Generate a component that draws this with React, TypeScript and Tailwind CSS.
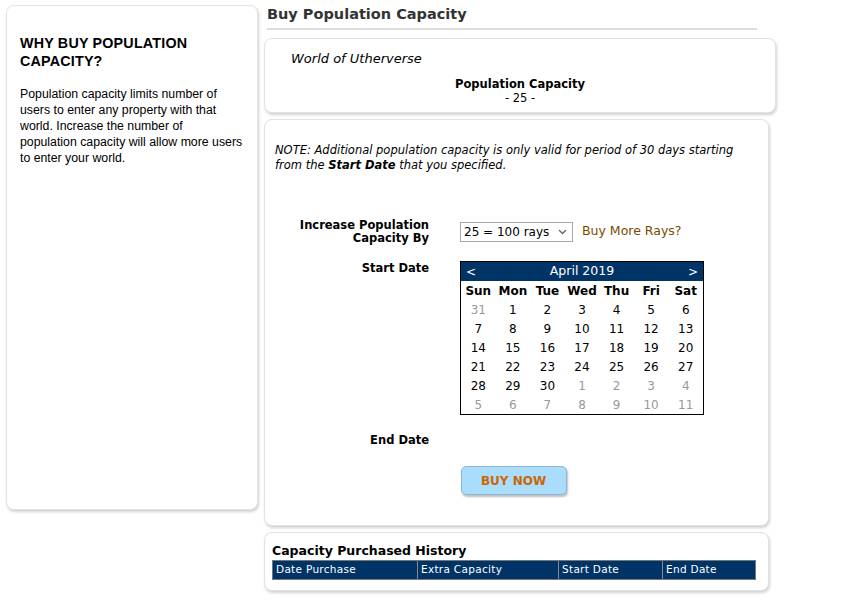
import React from 'react';

const days = ['Sun', 'Mon', 'Tue', 'Wed', 'Thu', 'Fri', 'Sat'];

const weeks: { d: number; other?: boolean }[][] = [
  [{ d: 31, other: true }, { d: 1 }, { d: 2 }, { d: 3 }, { d: 4 }, { d: 5 }, { d: 6 }],
  [{ d: 7 }, { d: 8 }, { d: 9 }, { d: 10 }, { d: 11 }, { d: 12 }, { d: 13 }],
  [{ d: 14 }, { d: 15 }, { d: 16 }, { d: 17 }, { d: 18 }, { d: 19 }, { d: 20 }],
  [{ d: 21 }, { d: 22 }, { d: 23 }, { d: 24 }, { d: 25 }, { d: 26 }, { d: 27 }],
  [{ d: 28 }, { d: 29 }, { d: 30 }, { d: 1, other: true }, { d: 2, other: true }, { d: 3, other: true }, { d: 4, other: true }],
  [5, 6, 7, 8, 9, 10, 11].map((d) => ({ d, other: true })),
];

const Calendar: React.FC = () => (
  <div className="w-[244px] border border-black bg-white text-[12px]">
    <div className="flex h-[19px] items-center justify-between bg-[#003366] px-[5px] text-white">
      <span>&lt;</span>
      <span className="text-[12.5px]">April 2019</span>
      <span>&gt;</span>
    </div>
    <div className="grid grid-cols-7">
      {days.map((d) => (
        <div key={d} className="flex h-[19px] items-center justify-center font-bold text-black">
          {d}
        </div>
      ))}
      {weeks.flat().map((c, i) => (
        <div
          key={i}
          className={`flex h-[19px] items-center justify-center ${c.other ? 'text-[#999]' : 'text-black'}`}
        >
          {c.d}
        </div>
      ))}
    </div>
  </div>
);

const card = 'rounded-[8px] border border-[#e2e2e2] bg-white shadow-[1px_2px_3px_rgba(0,0,0,0.18)]';

const App: React.FC = () => {
  return (
    <div className="flex h-[601px] w-[848px] bg-white font-['DejaVu_Sans',sans-serif] text-black">
      <aside className={`${card} ml-[6px] mt-[5px] h-[505px] w-[252px] px-[13px] pt-[28px] font-['Comic_Sans_MS','Liberation_Sans',sans-serif]`}>
        <h2 className="text-[14.3px] font-bold leading-[18px] tracking-[0.2px]">
          WHY BUY POPULATION CAPACITY?
        </h2>
        <p className="mt-[16px] whitespace-nowrap text-[12.3px] leading-[16px]">
          Population capacity limits number of
          <br />
          users to enter any property with that
          <br />
          world. Increase the number of
          <br />
          population capacity will allow more users
          <br />
          to enter your world.
        </p>
      </aside>

      <main className="ml-[6px] flex w-[512px] flex-col">
        <div className="ml-[3px] mt-[5px] w-[490px] border-b-2 border-[#dddddd] pb-[5px]">
          <h1 className="text-[14.5px] font-bold leading-[18px] text-[#333]">Buy Population Capacity</h1>
        </div>

        <section className={`${card} mt-[8px] h-[75px] w-[512px] pt-[12px]`}>
          <div className="pl-[26px] text-[13px] italic leading-[16px]">World of Utherverse</div>
          <div className="mt-[10px] text-center text-[11.5px] leading-[14px]">
            <div className="font-bold">Population Capacity</div>
            <div>- 25 -</div>
          </div>
        </section>

        <section className={`${card} mt-[6px] h-[407px] w-[505px] pt-[23px]`}>
          <p className="px-[10px] text-[11.5px] italic leading-[15px]">
            <span>NOTE: Additional population capacity is only valid for period of 30 days starting</span>
            <br />
            <span>from the </span>
            <span className="font-bold">Start Date</span>
            <span> that you specified.</span>
          </p>

          <div className="mt-[45px] flex">
            <div className="w-[164px] pt-[1px] text-right text-[11.5px] font-bold leading-[13px]">
              Increase Population
              <br />
              Capacity By
            </div>
            <div className="ml-[31px] flex items-center">
              <div className="flex h-[20px] w-[113px] items-center justify-between border border-[#a9a9a9] bg-white pl-[3px] pr-[5px] text-[12px]">
                <span>25 = 100 rays</span>
                <svg width="9" height="6" viewBox="0 0 9 6">
                  <path d="M1 1l3.5 3.5L8 1" fill="none" stroke="#666" strokeWidth="1.3" />
                </svg>
              </div>
              <span className="ml-[9px] text-[12.5px] text-[#7a4b00]">Buy More Rays?</span>
            </div>
          </div>

          <div className="mt-[16px] flex">
            <div className="w-[164px] pt-[1px] text-right text-[11.5px] font-bold leading-[13px]">Start Date</div>
            <div className="ml-[31px]">
              <Calendar />
            </div>
          </div>

          <div className="mt-[19px] flex">
            <div className="w-[164px] text-right text-[11.5px] font-bold leading-[13px]">End Date</div>
          </div>

          <div className="mt-[19px] flex justify-center pr-[6px]">
            <button className="h-[29px] w-[106px] rounded-[5px] border border-[#8cb8d8] bg-[#aadcfb] text-[12px] font-bold text-[#cc6600] shadow-[1px_2px_2px_rgba(0,0,0,0.25)]">
              BUY NOW
            </button>
          </div>
        </section>

        <section className={`${card} mt-[6px] h-[59px] w-[505px] px-[7px] pt-[10px]`}>
          <h3 className="text-[12.5px] font-bold leading-[15px]">Capacity Purchased History</h3>
          <div className="mt-[2px] grid h-[20px] w-[484px] grid-cols-[144px_141px_104px_95px] border border-[#777] bg-[#003366] text-[10.5px] tracking-[0.3px] text-white">
            <div className="flex items-center pl-[3px]">Date Purchase</div>
            <div className="flex items-center border-l border-[#888] pl-[3px]">Extra Capacity</div>
            <div className="flex items-center border-l border-[#888] pl-[3px]">Start Date</div>
            <div className="flex items-center border-l border-[#888] pl-[3px]">End Date</div>
          </div>
        </section>
      </main>
    </div>
  );
};

export default App;
